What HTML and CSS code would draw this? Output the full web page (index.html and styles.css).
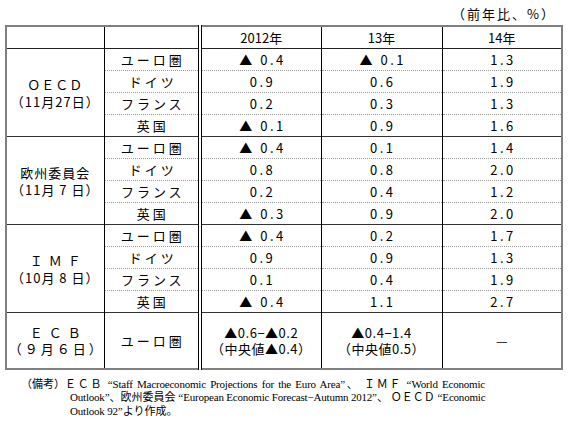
FILE: index.html
```html
<!DOCTYPE html>
<html>

<head>
    <link rel="stylesheet" href="styles.css">
</head>

<body>
    <div class="unit">（前年比、%）</div>

    <table class="outlook">
        <colgroup>
            <col class="c-org">
            <col class="c-area">
            <col class="c-y12">
            <col class="c-y13">
            <col class="c-y14">
        </colgroup>
        <thead>
            <tr>
                <th></th>
                <th></th>
                <th class="dbl">2012年</th>
                <th>13年</th>
                <th>14年</th>
            </tr>
        </thead>

        <!-- OECD -->
        <tbody class="grp">
            <tr>
                <td class="org" rowspan="4">ＯＥＣＤ<br>（11月27日）</td>
                <td class="area">ユーロ圏</td>
                <td class="num dbl">▲ 0.4</td>
                <td class="num">▲ 0.1</td>
                <td class="num">1.3</td>
            </tr>
            <tr>
                <td class="area">ドイツ</td>
                <td class="num dbl">0.9</td>
                <td class="num">0.6</td>
                <td class="num">1.9</td>
            </tr>
            <tr>
                <td class="area">フランス</td>
                <td class="num dbl">0.2</td>
                <td class="num">0.3</td>
                <td class="num">1.3</td>
            </tr>
            <tr>
                <td class="area">英国</td>
                <td class="num dbl">▲ 0.1</td>
                <td class="num">0.9</td>
                <td class="num">1.6</td>
            </tr>
        </tbody>

        <!-- 欧州委員会 -->
        <tbody class="grp">
            <tr>
                <td class="org" rowspan="4">欧州委員会<br>（11月 7 日）</td>
                <td class="area">ユーロ圏</td>
                <td class="num dbl">▲ 0.4</td>
                <td class="num">0.1</td>
                <td class="num">1.4</td>
            </tr>
            <tr>
                <td class="area">ドイツ</td>
                <td class="num dbl">0.8</td>
                <td class="num">0.8</td>
                <td class="num">2.0</td>
            </tr>
            <tr>
                <td class="area">フランス</td>
                <td class="num dbl">0.2</td>
                <td class="num">0.4</td>
                <td class="num">1.2</td>
            </tr>
            <tr>
                <td class="area">英国</td>
                <td class="num dbl">▲ 0.3</td>
                <td class="num">0.9</td>
                <td class="num">2.0</td>
            </tr>
        </tbody>

        <!-- IMF -->
        <tbody class="grp">
            <tr>
                <td class="org" rowspan="4"><span class="wide">ＩＭＦ</span><br>（10月 8 日）</td>
                <td class="area">ユーロ圏</td>
                <td class="num dbl">▲ 0.4</td>
                <td class="num">0.2</td>
                <td class="num">1.7</td>
            </tr>
            <tr>
                <td class="area">ドイツ</td>
                <td class="num dbl">0.9</td>
                <td class="num">0.9</td>
                <td class="num">1.3</td>
            </tr>
            <tr>
                <td class="area">フランス</td>
                <td class="num dbl">0.1</td>
                <td class="num">0.4</td>
                <td class="num">1.9</td>
            </tr>
            <tr>
                <td class="area">英国</td>
                <td class="num dbl">▲ 0.4</td>
                <td class="num">1.1</td>
                <td class="num">2.7</td>
            </tr>
        </tbody>

        <!-- ECB -->
        <tbody class="grp">
            <tr class="ecb">
                <td class="org"><span class="wide">ＥＣＢ</span><br><span class="date">（９月６日）</span></td>
                <td class="area">ユーロ圏</td>
                <td class="num tight dbl">▲0.6−▲0.2<br>（中央値▲0.4）</td>
                <td class="num tight">▲0.4−1.4<br>（中央値0.5）</td>
                <td class="num">—</td>
            </tr>
        </tbody>
    </table>

    <div class="notes">
        <span class="notes-label">（備考）</span>
        <div class="notes-text">
            <span class="line">ＥＣＢ “<i>Staff Macroeconomic Projections for the Euro Area</i>”、 ＩＭＦ “<i>World Economic</i></span>
            <span class="line">
                <i>Outlook</i>”、欧州委員会 “<i>European Economic Forecast−Autumn 2012</i>”、 ＯＥＣＤ “<i>Economic</i></span>
            <span class="line last"><i>Outlook 92</i>”より作成。</span>
        </div>
    </div>
</body>

</html>
```

FILE: styles.css
```css
body {
    margin: 0;
    background: #fff;
    color: #000;
    font-family: "Noto Sans CJK JP", sans-serif;
    font-size: 13px;
}

.unit {
    height: 25px;
    line-height: 28px;
    text-align: right;
    padding-right: 14px;
    font-size: 13px;
    letter-spacing: 2px;
}

.outlook {
    margin-left: 5px;
    width: 558px;
    table-layout: fixed;
    border-collapse: collapse;
    border: 2px solid #808080;
}

.c-org {
    width: 98px;
}

.c-area {
    width: 96px;
}

.c-y12 {
    width: 121px;
}

.c-y13 {
    width: 121px;
}

.c-y14 {
    width: 120px;
}

th,
td {
    padding: 0;
    height: 21px;
    line-height: 20px;
    text-align: center;
    font-weight: normal;
    border-left: 1px solid #000;
    border-top: 1px dotted #9a9a9a;
    white-space: nowrap;
}

thead th {
    border-top: none;
    border-bottom: 1px solid #222;
}

.grp tr:first-child td {
    border-top: 1px solid #333;
}

.dbl {
    border-left: 4px double #000;
}

.org {
    line-height: 17px;
    letter-spacing: 1px;
}

.wide {
    letter-spacing: 6px;
    margin-right: -6px;
}

.area {
    letter-spacing: 3px;
    text-indent: 3px;
}

.num {
    letter-spacing: 2.5px;
    text-indent: 2.5px;
}

.num.tight {
    letter-spacing: 0.5px;
    text-indent: 0;
    line-height: 16px;
}

.ecb td {
    height: 55px;
}

.ecb .org {
    line-height: 16px;
}

.date {
    letter-spacing: 3px;
    margin-right: -3px;
}

.notes {
    display: flex;
    margin: 8px 0 0 21px;
    font-family: "Liberation Serif", "Noto Sans CJK JP", serif;
    font-size: 11px;
    line-height: 13.3px;
}

.notes-label {
    width: 44px;
    flex: none;
}

.notes-text {
    width: 420px;
}

.notes-text i {
    font-style: normal;
    letter-spacing: -0.2px;
}

.line {
    display: block;
    white-space: nowrap;
    text-align: justify;
    text-align-last: justify;
}

.line + .line {
    padding-left: 5px;
    width: 415px;
}

.line.last {
    text-align-last: left;
}
```
